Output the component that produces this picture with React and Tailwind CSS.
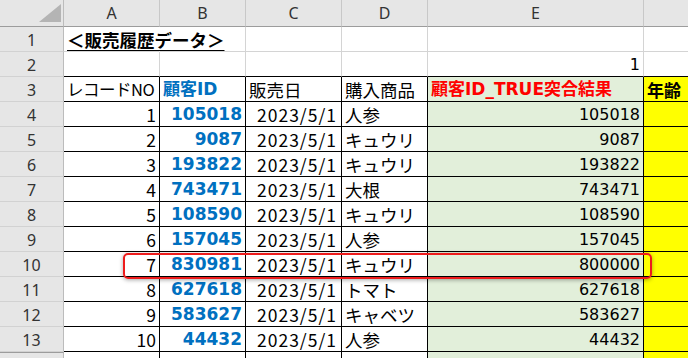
import React from 'react';

// Sheet geometry, in px, taken from the screenshot
const COLS = [
  { key: 'A', w: 'w-[96px]' },
  { key: 'B', w: 'w-[86px]' },
  { key: 'C', w: 'w-[96px]' },
  { key: 'D', w: 'w-[86px]' },
  { key: 'E', w: 'w-[216px]' },
  { key: 'F', w: 'w-[200px]' },
];

const ROWS = [
  [1, 105018, '人参', 105018],
  [2, 9087, 'キュウリ', 9087],
  [3, 193822, 'キュウリ', 193822],
  [4, 743471, '大根', 743471],
  [5, 108590, 'キュウリ', 108590],
  [6, 157045, '人参', 157045],
  [7, 830981, 'キュウリ', 800000],
  [8, 627618, 'トマト', 627618],
  [9, 583627, 'キャベツ', 583627],
  [10, 44432, '人参', 44432],
];

const jp = "font-['Noto_Sans_CJK_JP',sans-serif]";
const dv = "font-['DejaVu_Sans','Noto_Sans_CJK_JP',sans-serif]";

function RowHead({ children }) {
  return (
    <div className="w-[64px] h-[25px] shrink-0 flex items-center justify-center bg-[#e6e6e6] border-r border-r-[#bcbcbc] border-b border-b-[#d2d2d2] text-[16px] text-[#333] font-['Noto_Sans',sans-serif] leading-none pt-[1px]">
      {children}
    </div>
  );
}

function Cell({ w, className = '', children }) {
  return (
    <div className={`${w} h-[25px] shrink-0 flex items-center border-r border-b leading-none px-[3px] pt-[1px] ${className}`}>
      {children}
    </div>
  );
}

export default function App() {
  return (
    <div className="relative w-[688px] h-[358px] overflow-hidden bg-white text-black">
      {/* Column letters */}
      <div className="flex h-[27px]">
        <div className="w-[64px] shrink-0 relative bg-[#e6e6e6] border-r border-r-[#bcbcbc] border-b border-b-[#9c9c9c]">
          <svg className="absolute right-[2px] bottom-[4px]" width="22" height="18" viewBox="0 0 22 18">
            <polygon points="22,0 22,18 0,18" fill="#b4b4b4" />
          </svg>
        </div>
        {COLS.map((c) => (
          <div
            key={c.key}
            className={`${c.w} shrink-0 flex items-center justify-center bg-[#e6e6e6] border-r border-r-[#c8c8c8] border-b border-b-[#9c9c9c] text-[16px] text-[#333] font-['Noto_Sans',sans-serif] leading-none`}
          >
            {c.key}
          </div>
        ))}
      </div>

      {/* Row 1: title */}
      <div className="flex">
        <RowHead>1</RowHead>
        <Cell w={COLS[0].w} className="border-b-[#d4d4d4] border-r-transparent overflow-visible">
          <span className={`${jp} font-bold text-[17.5px] underline underline-offset-[3px] whitespace-nowrap relative z-10`}>
            ＜販売履歴データ＞
          </span>
        </Cell>
        {COLS.slice(1).map((c) => (
          <Cell key={c.key} w={c.w} className="border-[#d4d4d4]" />
        ))}
      </div>

      {/* Row 2 */}
      <div className="flex">
        <RowHead>2</RowHead>
        {COLS.map((c) => (
          <Cell key={c.key} w={c.w} className={`border-r-[#d4d4d4] border-b-black ${c.key === 'E' ? 'justify-end' : ''}`}>
            {c.key === 'E' && <span className={`${dv} text-[16px]`}>1</span>}
          </Cell>
        ))}
      </div>

      {/* Row 3: headers */}
      <div className="flex">
        <RowHead>3</RowHead>
        <Cell w={COLS[0].w} className="border-black">
          <span className={`${jp} text-[16.5px] tracking-[-0.5px] whitespace-nowrap`}>レコードNO</span>
        </Cell>
        <Cell w={COLS[1].w} className="border-black">
          <span className={`${dv} font-bold text-[17px] text-[#0070c0]`}>顧客ID</span>
        </Cell>
        <Cell w={COLS[2].w} className="border-black">
          <span className={`${jp} text-[17.5px]`}>販売日</span>
        </Cell>
        <Cell w={COLS[3].w} className="border-black">
          <span className={`${jp} text-[17.5px]`}>購入商品</span>
        </Cell>
        <Cell w={COLS[4].w} className="border-black bg-[#e2efda]">
          <span className={`${dv} font-bold text-[17px] text-[#ff0000] whitespace-nowrap`}>顧客ID_TRUE突合結果</span>
        </Cell>
        <Cell w={COLS[5].w} className="border-black bg-[#ffff00]">
          <span className={`${jp} font-bold text-[17px]`}>年齢</span>
        </Cell>
      </div>

      {/* Data rows */}
      {ROWS.map(([no, id, item, result], i) => (
        <div key={no} className="flex">
          <RowHead>{i + 4}</RowHead>
          <Cell w={COLS[0].w} className="border-black justify-end">
            <span className={`${jp} text-[17.5px]`}>{no}</span>
          </Cell>
          <Cell w={COLS[1].w} className="border-black justify-end">
            <span className={`${dv} font-bold text-[17px] text-[#0070c0]`}>{id}</span>
          </Cell>
          <Cell w={COLS[2].w} className="border-black justify-end pr-[4px]">
            <span className={`${jp} text-[17.5px] tracking-[1px]`}>2023/5/1</span>
          </Cell>
          <Cell w={COLS[3].w} className="border-black">
            <span className={`${jp} text-[17.5px] whitespace-nowrap`}>{item}</span>
          </Cell>
          <Cell w={COLS[4].w} className="border-black bg-[#e2efda] justify-end">
            <span className={`${dv} text-[16px]`}>{result}</span>
          </Cell>
          <Cell w={COLS[5].w} className="border-black bg-[#ffff00]" />
        </div>
      ))}

      {/* Row 14, cut off by the window */}
      <div className="flex">
        <div className="w-[64px] h-[25px] shrink-0 bg-[#e6e6e6] border-t border-t-[#9c9c9c] border-r border-r-[#bcbcbc] overflow-hidden">
          <span className="block pl-[2px] pt-[2px] text-[15px] leading-none text-[#333] font-['Noto_Sans',sans-serif]">500004</span>
        </div>
        {COLS.map((c) => (
          <Cell key={c.key} w={c.w} className={`border-black ${c.key === 'E' ? 'bg-[#e2efda]' : ''} ${c.key === 'F' ? 'bg-[#ffff00]' : ''}`} />
        ))}
      </div>

      {/* Red highlight around row 10 */}
      <div className="absolute left-[123px] top-[253px] w-[529px] h-[26px] rounded-[5px] border-2 border-[#ee1c1c] shadow-[0_1px_4px_rgba(0,0,0,0.35)] pointer-events-none" />
    </div>
  );
}
